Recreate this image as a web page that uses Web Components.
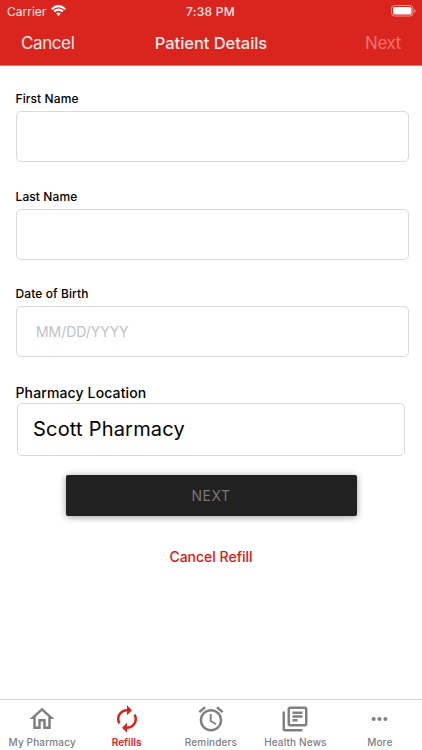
<!DOCTYPE html>
<html lang="en"><head><meta charset="utf-8"><title>Patient Details</title>
<style>
html,body{margin:0;height:100%;background:#fff;overflow:hidden}
body{font-family:Inter,"Liberation Sans",sans-serif;color:#000}
</style></head><body>
<refill-screen></refill-screen>
<script>
const define=(name,html)=>customElements.define(name,class extends HTMLElement{
  constructor(){super();this.attachShadow({mode:'open'}).innerHTML=html;}
});

define('status-bar',`<style>
:host{display:grid;grid-template-columns:1fr auto 1fr;align-items:center;height:22px;padding:0 6px 0 7px;font-size:12px;color:#ffe9e6}
.l{display:flex;align-items:center;gap:5px}.r{display:flex;justify-content:flex-end}
.carrier{letter-spacing:0}.time{font-weight:500;letter-spacing:.25px;margin-right:2px}
svg{display:block;margin-top:-1px}
</style>
<div class="l"><span class="carrier">Carrier</span>
<svg width="15" height="11" viewBox="0 0 15 11" fill="none" stroke="#fff" stroke-width="2"><path d="M.8 4.2Q7.500-2 14.200 4.200M3.100 6.600Q7.500 2.600 11.900 6.600"/><path d="M7.500 11 5.100 8.600Q7.500 6.600 9.900 8.600Z" fill="#fff" stroke="none"/></svg></div>
<span class="time">7:38 PM</span>
<div class="r"><svg width="25" height="12" viewBox="0 0 25 12"><rect x=".5" y=".5" width="21.500" height="10.500" rx="3" fill="none" stroke="#f19a96"/><rect x="2" y="2" width="18.500" height="7.500" rx="1.500" fill="#fff"/><path d="M23.300 4v4q1.200-.6 1.200-2t-1.200-2" fill="#f19a96"/></svg></div>`);

define('nav-bar',`<style>
:host{display:grid;grid-template-columns:1fr auto 1fr;align-items:center;height:42px;padding:0 21px 0 21px;font-size:17px;letter-spacing:-.4px;color:#ffeae8}
.t{font-weight:500;font-size:16.500px;letter-spacing:-.05px}.n{text-align:right;color:#ee7470}
</style><span class="c"><slot name="back"></slot></span><span class="t"><slot></slot></span><span class="n"><slot name="next"></slot></span>`);

define('form-field',`<style>
:host{display:block}
.label{height:17px;line-height:17px;font-size:12px;font-weight:500;letter-spacing:.1px;margin-bottom:4px;white-space:nowrap;text-indent:-.5px}
.box{box-sizing:border-box;height:51px;border:1px solid #dadada;border-radius:5px;display:flex;align-items:center;padding:0 19px;font-size:14px;letter-spacing:-.05px;color:#c2c2c4}
:host([large]) .label{font-size:14px;letter-spacing:.13px;margin-bottom:2px}
:host([large]) .box{margin:0 4px 0 1px;height:53px;padding:0 15px;font-size:20px;color:#000;letter-spacing:.2px}
</style><div class="label"><slot name="label"></slot></div><div class="box"><slot></slot></div>`);

define('primary-button',`<style>
:host{display:flex;align-items:center;justify-content:center;width:291px;height:41px;background:#212121;color:#777;border-radius:2px;box-shadow:0 1px 7px rgba(0,0,0,.4);font-size:14px;letter-spacing:.5px}
</style><slot></slot>`);

const icons={
home:'<path d="M12 5.690l5 4.500V18h-2v-6H9v6H7v-7.810l5-4.500M12 3L2 12h3v8h6v-6h2v6h6v-8h3L12 3z"/>',
refill:'<path d="M12 6v3l4-4-4-4v3c-4.420 0-8 3.580-8 8 0 1.570.46 3.030 1.240 4.260L6.700 14.800c-.45-.83-.7-1.790-.7-2.800 0-3.310 2.690-6 6-6zm6.760 1.740L17.300 9.200c.44.84.7 1.790.7 2.800 0 3.310-2.690 6-6 6v-3l-4 4 4 4v-3c4.420 0 8-3.580 8-8 0-1.570-.46-3.030-1.240-4.260z"/>',
alarm:'<path d="M22 5.720l-4.600-3.860-1.290 1.530 4.600 3.860L22 5.720zM7.880 3.390L6.600 1.860 2 5.710l1.290 1.530 4.590-3.850zM12.500 8H11v6l4.750 2.850.75-1.230-4-2.370V8zM12 4c-4.970 0-9 4.030-9 9s4.020 9 9 9c4.970 0 9-4.030 9-9s-4.030-9-9-9zm0 16c-3.870 0-7-3.130-7-7s3.130-7 7-7 7 3.130 7 7-3.130 7-7 7z"/>',
news:'<path d="M4 6H2v14c0 1.100.9 2 2 2h14v-2H4V6zm16-4H8c-1.100 0-2 .9-2 2v12c0 1.100.9 2 2 2h12c1.100 0 2-.9 2-2V4c0-1.100-.9-2-2-2zm0 14H8V4h12v12zM10 9h8v2h-8zm0 3h4v2h-4zm0-6h8v2h-8z"/>',
more:'<circle cx="6.900" cy="12" r="1.600"/><circle cx="11.600" cy="12" r="1.600"/><circle cx="16.300" cy="12" r="1.600"/>'
};
customElements.define('tab-item',class extends HTMLElement{
  constructor(){super();this.attachShadow({mode:'open'});}
  connectedCallback(){this.shadowRoot.innerHTML=`<style>
:host{display:flex;flex-direction:column;align-items:center;color:#808080;font-size:10px;font-weight:500;letter-spacing:.15px;white-space:nowrap}
:host([active]){color:#d8231f;font-weight:600;letter-spacing:0}
svg{display:block;width:30px;height:30px;margin-top:4px;fill:currentColor}
span{line-height:14px;margin-top:1px}
</style><svg viewBox="0 0 24 24">${icons[this.getAttribute('icon')]}</svg><span><slot></slot></span>`;}
});
define('tab-bar',`<style>:host{display:grid;grid-template-columns:repeat(5,1fr);box-sizing:border-box;height:51px;border-top:1px solid #d6d6d6;background:#fff}</style><slot></slot>`);

define('refill-screen',`<style>
:host{display:flex;flex-direction:column;width:422px;height:750px}
header{background:#da241e;height:65px;border-bottom:1px solid #e67470}
main{flex:1;display:flex;flex-direction:column;padding:24px 13px 0 16px}
form-field{margin-bottom:25.500px}
form-field[large]{margin:1px 0 19px}
primary-button{margin-left:49.500px}
.cancel{align-self:center;margin:31px 0 0 -3px;line-height:20px;font-size:14px;font-weight:500;color:#e01414}
</style>
<header><status-bar></status-bar><nav-bar><span slot="back">Cancel</span>Patient Details<span slot="next">Next</span></nav-bar></header>
<main>
<form-field><span slot="label">First Name</span></form-field>
<form-field><span slot="label">Last Name</span></form-field>
<form-field><span slot="label">Date of Birth</span>MM/DD/YYYY</form-field>
<form-field large><span slot="label">Pharmacy Location</span>Scott Pharmacy</form-field>
<primary-button>NEXT</primary-button>
<div class="cancel">Cancel Refill</div>
</main>
<tab-bar><tab-item icon="home">My Pharmacy</tab-item><tab-item icon="refill" active>Refills</tab-item><tab-item icon="alarm">Reminders</tab-item><tab-item icon="news">Health News</tab-item><tab-item icon="more">More</tab-item></tab-bar>`);
</script></body></html>
